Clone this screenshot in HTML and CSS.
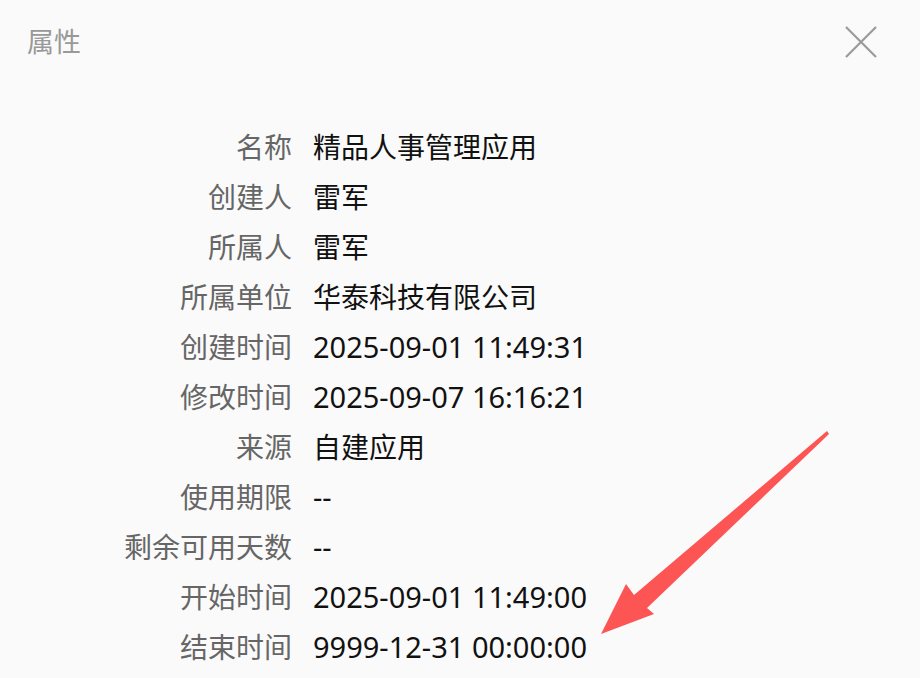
FILE: index.html
```html
<!DOCTYPE html>
<html lang="zh-CN">
<head>
<meta charset="utf-8">
<title>属性</title>
<link rel="stylesheet" href="styles.css">
</head>
<body>
<div class="dialog">
  <div class="header">
    <div class="title">属性</div>
    <button class="close" aria-label="关闭">
      <svg width="32" height="32" viewBox="0 0 32 32"><path d="M1 1 L31 31 M31 1 L1 31" stroke="#9a9a9a" stroke-width="2.2" fill="none"/></svg>
    </button>
  </div>
  <div class="props">
    <div class="label">名称</div><div class="value">精品人事管理应用</div>
    <div class="label">创建人</div><div class="value">雷军</div>
    <div class="label">所属人</div><div class="value">雷军</div>
    <div class="label">所属单位</div><div class="value">华泰科技有限公司</div>
    <div class="label">创建时间</div><div class="value num">2025-09-01 11:49:31</div>
    <div class="label">修改时间</div><div class="value num">2025-09-07 16:16:21</div>
    <div class="label">来源</div><div class="value">自建应用</div>
    <div class="label">使用期限</div><div class="value num">--</div>
    <div class="label">剩余可用天数</div><div class="value num">--</div>
    <div class="label">开始时间</div><div class="value num">2025-09-01 11:49:00</div>
    <div class="label">结束时间</div><div class="value num">9999-12-31 00:00:00</div>
  </div>
  <svg class="arrow" width="920" height="678" viewBox="0 0 920 678">
    <polygon points="827,431 829,434 647,608 654,614 601,634 626,584 634,595" fill="#fd5454"/>
  </svg>
</div>
</body>
</html>
```

FILE: styles.css
```css
html, body {
  margin: 0;
  padding: 0;
  background: #fafafa;
}
body {
  font-family: "Noto Sans", "Noto Sans CJK SC", sans-serif;
  width: 920px;
  height: 678px;
  overflow: hidden;
}
.dialog {
  position: relative;
  width: 920px;
  height: 678px;
}
.header {
  display: flex;
  justify-content: space-between;
  align-items: center;
  padding: 21px 43px 0 27px;
  height: 42px;
}
.title {
  font-size: 27px;
  line-height: 40px;
  color: #999;
}
.close {
  border: 0;
  background: none;
  padding: 0;
  width: 32px;
  height: 32px;
  display: flex;
}
.props {
  display: grid;
  grid-template-columns: 292px 1fr;
  column-gap: 21px;
  grid-auto-rows: 50px;
  margin-top: 59px;
  font-size: 28px;
  line-height: 50px;
}
.label {
  text-align: right;
  color: #666;
  white-space: nowrap;
}
.value {
  color: #111;
  white-space: nowrap;
}
.value.num {
  font-size: 29px;
}
.arrow {
  position: absolute;
  left: 0;
  top: 0;
  pointer-events: none;
}
```
